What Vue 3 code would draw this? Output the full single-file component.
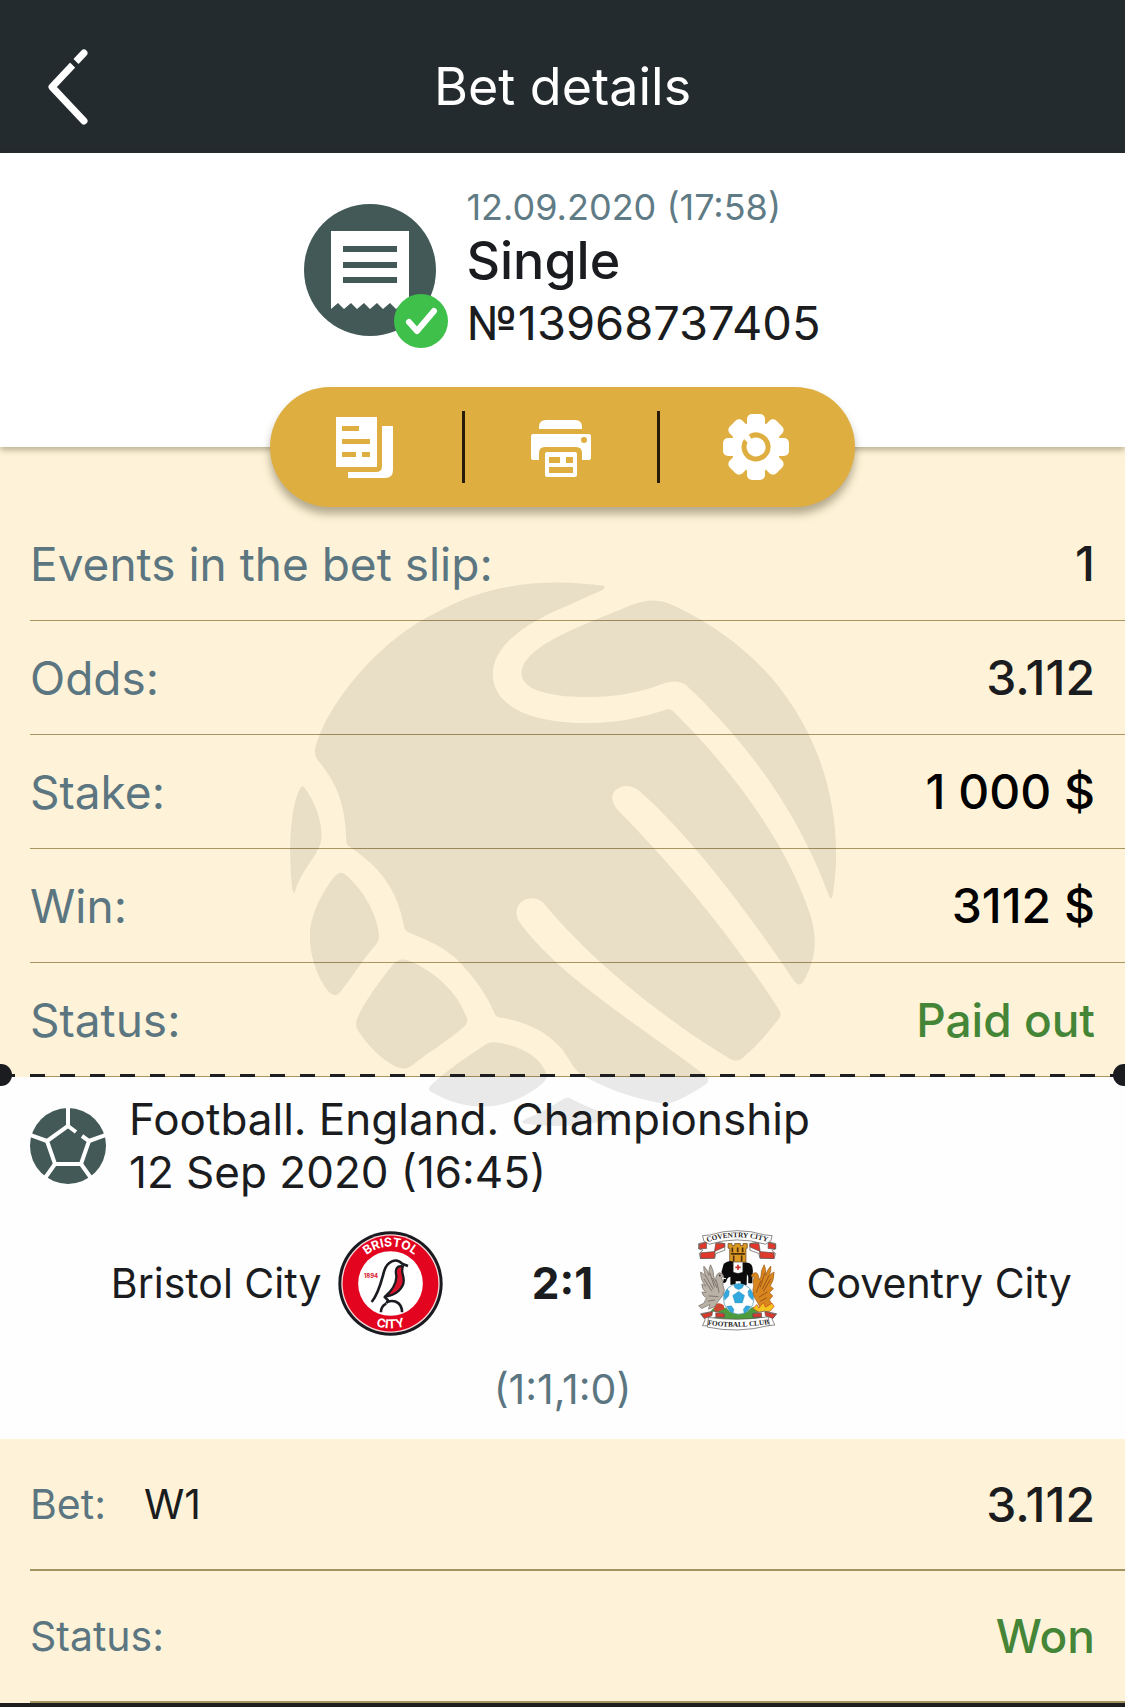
<template>
  <div class="page">
    <header class="topbar">
      <button class="back" type="button" aria-label="Back">
        <svg viewBox="0 0 44 80" width="44" height="80">
          <path d="M38 6L6 40L38 74" />
          <path class="cut" d="M23 11L34 22" />
        </svg>
      </button>
      <h1>Bet details</h1>
    </header>

    <section class="ticket">
      <svg class="ticket-icon" viewBox="0 0 144 144" width="144" height="144" aria-hidden="true">
        <circle cx="66" cy="66" r="66" fill="#425957" />
        <path d="M27 27H105V104L99 99L92 105L86 99L79 105L73 99L66 105L60 99L53 105L47 99L40 105L34 99L27 105Z" fill="#fff" />
        <path d="M39 45H93M39 61H93M39 76H93" stroke="#425957" stroke-width="6" />
        <circle cx="117" cy="117" r="27" fill="#3fc04b" />
        <path d="M105 118 L113 127 L130 107" fill="none" stroke="#fff" stroke-width="6" stroke-linecap="round" stroke-linejoin="round" />
      </svg>
      <div class="ticket-text">
        <time class="date">12.09.2020 (17:58)</time>
        <h2>Single</h2>
        <div class="number">№13968737405</div>
      </div>
    </section>

    <main class="slip">
      <section class="summary">
        <nav class="actions">
          <button type="button" aria-label="Copy bet slip">
            <svg viewBox="0 0 68 68" width="68" height="68">
              <path fill-rule="evenodd" d="M4 4H45V54H4ZM10 13V18H27V13ZM10 26V31H38V26ZM10 39V44H24V39ZM30 39V44H38V39Z" />
              <path d="M50 13H61V57Q61 65 53 65H16V59H44Q50 59 50 53Z" />
            </svg>
          </button>
          <button type="button" aria-label="Print">
            <svg viewBox="0 0 68 68" width="68" height="68">
              <path d="M12 16V14Q12 7 19 7H48Q55 7 55 14V16Z" />
              <path fill-rule="evenodd" d="M6 21H62Q64 21 64 23V45Q64 47 62 47H55V40Q55 34 49 34H18Q12 34 12 40V47H6Q4 47 4 45V23Q4 21 6 21ZM57 24A3 3 0 1 0 57 30A3 3 0 1 0 57 24Z" />
              <path fill-rule="evenodd" d="M20 39H48Q50 39 50 41V62Q50 64 48 64H20Q18 64 18 62V41Q18 39 20 39ZM22 44V50H33V44ZM39 44V50H46V44ZM22 54V60H46V54Z" />
            </svg>
          </button>
          <button type="button" aria-label="Settings">
            <svg viewBox="0 0 68 68" width="68" height="68">
              <circle cx="34" cy="34" r="25" />
              <rect
                v-for="angle in gearTeeth"
                :key="angle"
                x="25" y="1" width="18" height="18" rx="5"
                :transform="`rotate(${angle} 34 34)`"
              />
              <path class="gear-ring" d="M28 23.6A12 12 0 1 1 24.5 26.7" />
              <path d="M25 22L33 30L30 34L22 26Z" />
            </svg>
          </button>
        </nav>

        <dl class="rows">
          <div v-for="row in summary" :key="row.label" class="row">
            <dt>{{ row.label }}</dt>
            <dd :class="row.tone">{{ row.value }}</dd>
          </div>
        </dl>
        <div class="tear"></div>
      </section>

      <section class="event">
        <div class="event-head">
          <svg viewBox="0 0 76 76" width="76" height="76" aria-hidden="true">
            <circle cx="38" cy="38" r="38" fill="#425957" />
            <g fill="none" stroke="#fff" stroke-width="4">
              <path d="M38 0V18L17 33L25 56H51L59 33L52 28M38 18L46 24" />
              <path d="M17 33L0 27M59 33L76 27M25 56L15 70M51 56L61 70" />
            </g>
          </svg>
          <div class="event-title">
            <div>Football. England. Championship</div>
            <div>12 Sep 2020 (16:45)</div>
          </div>
        </div>

        <div class="match">
          <div class="team home">
            <span>Bristol City</span>
            <svg viewBox="46 43 318 318" width="105" height="105" role="img" aria-label="Bristol City crest">
              <defs>
                <path id="arcTop" d="M93 202A112 112 0 0 1 317 202" />
                <path id="arcBottom" d="M69 202A136 136 0 0 0 341 202" />
              </defs>
              <circle cx="205" cy="202" r="158" fill="#191b20" />
              <circle cx="205" cy="202" r="149" fill="#f6d9dc" />
              <circle cx="205" cy="202" r="145" fill="#e3041f" />
              <circle cx="205" cy="202" r="98" fill="#fff" />
              <text class="crest-ring"><textPath href="#arcTop" startOffset="50%" text-anchor="middle">BRISTOL</textPath></text>
              <text class="crest-ring"><textPath href="#arcBottom" startOffset="50%" text-anchor="middle">CITY</textPath></text>
              <text class="crest-year" x="124" y="186">1894</text>
              <path d="M243 150C220 146 219 164 223 181C222 203 212 222 188 242C221 238 247 216 245 190C243 170 236 165 243 150Z" fill="#d8122a" stroke="#191b20" stroke-width="7" stroke-linejoin="round" />
              <g fill="none" stroke="#191b20" stroke-width="8">
                <path d="M148 258C170 232 178 192 186 164C194 136 222 122 240 142L258 149" />
                <path d="M186 241L198 254L192 262" />
                <path d="M176 289C176 276 182 268 192 263M196 257C224 249 240 266 240 289" />
              </g>
            </svg>
          </div>
          <strong class="score">2:1</strong>
          <div class="team">
            <svg viewBox="35 48 326 326" width="108" height="108" role="img" aria-label="Coventry City crest">
              <defs>
                <path id="ribbonTop" d="M112 86Q198 60 286 86" />
                <path id="ribbonBottom" d="M112 338Q198 350 292 335" />
              </defs>
              <!-- upper ribbon -->
              <g stroke="#55504e" stroke-width="2">
                <path d="M82 92L120 84L161 92V112L134 122L131 136L88 137L84 122L95 112L82 108Z" fill="#fff" />
                <path d="M315 92L278 84L237 92V112L264 122L267 136L310 137L314 122L303 112L315 108Z" fill="#fff" />
                <path d="M84 94L106 88V107L84 108ZM134 91L161 92V102L130 116ZM88 120L132 116L130 136L88 137Z" fill="#e0392c" />
                <path d="M314 94L292 88V107L314 108ZM264 91L237 92V102L268 116ZM310 120L266 116L268 136L310 137Z" fill="#e0392c" />
                <path d="M94 68L116 66Q198 40 282 66L304 68L300 84L284 94Q198 68 114 94L98 84Z" fill="#fff" />
              </g>
              <text class="crest-ribbon"><textPath href="#ribbonTop" startOffset="50%" text-anchor="middle">COVENTRY CITY</textPath></text>
              <!-- castle and elephant -->
              <path d="M171 92H183V98H191V92H208V98H216V92H229V106H225V148H176V106H171Z" fill="#dc9a25" stroke="#5b3a10" stroke-width="2" />
              <path d="M184 104V118M200 104V118M215 104V118M180 123H222M188 128V146M212 128V146" stroke="#4c300c" stroke-width="5" />
              <path d="M158 153Q176 139 190 149H228Q246 150 246 174L244 212H232V192L228 184L227 217H209V206H194V216H178V192Q168 194 166 206Q162 214 153 209Q160 204 157 192L151 178Z" fill="#0c0b0c" />
              <path d="M154 184Q150 198 165 198" fill="none" stroke="#faf5e9" stroke-width="3" />
              <path d="M187 148H215V178Q201 185 187 178Z" fill="#fff" stroke="#777" stroke-width="1" />
              <path d="M201 156V172M193 164H209" stroke="#c6342b" stroke-width="5" />
              <!-- ground -->
              <path d="M116 300Q132 274 160 286H240Q266 276 294 300L284 317Q198 328 126 318Z" fill="#4c9b3c" />
              <path d="M128 288Q136 262 158 278L160 290L132 300Z" fill="#cf4630" />
              <!-- ball -->
              <circle cx="203" cy="259" r="46" fill="#fff" stroke="#3f8fb4" stroke-width="2" />
              <g fill="#32a9de" stroke="#2c81aa" stroke-width="1">
                <path d="M203 236L221 249L214 271H192L185 249Z" />
                <path d="M188 217L203 213L219 217L214 226L203 231L192 226Z" />
                <path d="M158 248L168 229L175 236L173 250L161 263Z" />
                <path d="M248 248L238 229L231 236L233 250L245 263Z" />
                <path d="M167 281L181 280L189 291L186 302Q174 296 167 281Z" />
                <path d="M239 281L225 280L217 291L220 302Q232 296 239 281Z" />
              </g>
              <!-- griffin -->
              <path d="M88 178Q98 182 103 190Q96 172 98 160Q110 172 113 188Q112 168 118 156Q128 172 128 192L134 206Q132 186 144 180Q156 180 158 192L150 194L156 206Q154 220 160 232Q158 250 146 260Q136 272 132 282L112 290L116 276L92 288L82 280L98 272L106 256Q94 250 92 238L104 240Q90 226 92 214L104 220Q88 204 88 178Z" fill="#b9b0a6" stroke="#6f6761" stroke-width="2" />
              <path d="M98 198L122 236M104 190L126 230M116 180L130 224M124 196L138 226M136 204L144 240M112 250L142 252M110 266L132 262" fill="none" stroke="#7d746d" stroke-width="3" />
              <circle cx="146" cy="188" r="3" fill="#3b3532" />
              <!-- phoenix -->
              <path d="M310 178Q300 182 295 190Q302 172 300 160Q288 172 285 188Q286 168 280 156Q270 172 270 192L264 202Q264 184 256 180Q246 178 240 190L250 194L246 206Q250 220 246 232Q246 250 254 260Q262 272 266 282L286 290L304 276L296 262L306 250L296 240L308 228L298 220Q310 204 310 178Z" fill="#d9861f" stroke="#9b5c1c" stroke-width="2" />
              <path d="M300 198L278 236M294 190L274 230M282 180L268 224M270 204L256 240M290 238L264 254M288 256L268 266" fill="none" stroke="#9a551a" stroke-width="3" />
              <path d="M246 288L258 276L264 286L278 270L284 284L304 272L310 282L298 296L266 300Z" fill="#f3c51f" stroke="#cf3f24" stroke-width="2" />
              <!-- lower ribbon -->
              <g stroke="#55504e" stroke-width="2">
                <path d="M88 304L126 296L160 303V314L128 316L116 340L94 340L102 322Z" fill="#fff" />
                <path d="M318 304L280 296L246 303V314L278 316L290 340L312 338L304 320Z" fill="#fff" />
                <path d="M90 305L124 298L122 310L100 318ZM134 301L160 304V314L134 314Z" fill="#d8392d" />
                <path d="M316 305L282 298L284 310L306 318ZM272 301L246 304V314L272 314Z" fill="#d8392d" />
                <path d="M112 315Q200 327 292 313L296 339Q200 364 108 344Z" fill="#fff" />
              </g>
              <text class="crest-ribbon"><textPath href="#ribbonBottom" startOffset="50%" text-anchor="middle">FOOTBALL CLUB</textPath></text>
            </svg>
            <span>Coventry City</span>
          </div>
        </div>
        <div class="halves">(1:1,1:0)</div>
      </section>

      <!-- ball watermark, runs across both sections -->
      <svg class="watermark" viewBox="54 58 1424 1424" aria-hidden="true">
        <path d="M872 68C882 74 862 82 835 94L740 136C650 178 583 232 583 298C583 386 690 426 830 426C910 426 970 412 1038 390Q1046 388 1054 396C1180 520 1345 720 1412 930C1430 990 1426 1040 1394 1098Q1384 1116 1370 1100C1290 980 1120 740 966 604C944 584 916 588 902 602C888 618 894 638 912 656C1060 806 1210 990 1330 1174Q1338 1186 1328 1198C1300 1236 1270 1268 1236 1298Q1222 1312 1202 1302C1050 1210 850 1060 716 896C700 878 670 880 656 894C640 910 642 932 656 950C760 1090 960 1210 1138 1346Q1152 1358 1138 1368C1110 1388 1090 1398 1064 1410Q1040 1422 1006 1414C930 1400 870 1374 822 1348C790 1330 782 1296 758 1270C720 1228 660 1202 602 1194Q590 1192 586 1180C566 1130 520 1070 482 1036C440 1000 400 988 364 972Q354 968 352 958C342 910 332 876 302 834C276 796 240 770 206 746Q200 742 201 732C198 660 190 600 128 524Q116 510 120 492C150 370 300 200 432 140C580 54 740 50 872 68Z" />
        <path d="M940 120C990 100 1020 102 1060 122C1190 184 1300 276 1370 390C1460 530 1496 710 1470 870Q1466 896 1458 872C1380 660 1250 480 1086 326C1066 312 1040 318 1024 324C970 346 900 358 830 358C720 358 660 336 658 298C658 226 810 174 940 120Z" />
        <path d="M80 598Q86 584 94 598C118 630 138 680 136 724C134 768 88 800 68 862Q64 878 60 858C50 780 52 650 80 598Z" />
        <path d="M172 824Q186 808 202 824C246 862 282 926 286 980Q286 994 278 1004C246 1040 218 1086 186 1126Q172 1144 156 1128C124 1090 104 1030 106 974C108 920 144 858 172 824Z" />
        <path d="M322 1056Q340 1036 364 1046C430 1072 494 1130 516 1198Q518 1210 508 1218C464 1256 414 1286 370 1320Q352 1332 330 1322C292 1304 254 1264 230 1226Q224 1216 228 1200C244 1156 288 1100 322 1056Z" />
        <path d="M564 1264Q578 1256 592 1259C648 1266 704 1292 722 1338Q726 1356 710 1368C670 1402 610 1428 550 1426C496 1424 456 1408 420 1386Q412 1380 422 1370C464 1330 514 1298 564 1264Z" />
        <path d="M768 1406Q778 1400 790 1407C830 1428 866 1442 910 1454C840 1478 740 1482 664 1470Q652 1466 670 1458C706 1444 740 1424 768 1406Z" />
      </svg>
    </main>

    <dl class="bet-rows">
      <div class="bet-row">
        <dt>Bet:</dt>
        <dd class="pick">W1</dd>
        <dd class="value">3.112</dd>
      </div>
      <div class="bet-row">
        <dt>Status:</dt>
        <dd class="value green">Won</dd>
      </div>
    </dl>
  </div>
</template>

<script setup>
const summary = [
  { label: 'Events in the bet slip:', value: '1' },
  { label: 'Odds:', value: '3.112' },
  { label: 'Stake:', value: '1 000 $', tone: 'black' },
  { label: 'Win:', value: '3112 $', tone: 'black' },
  { label: 'Status:', value: 'Paid out', tone: 'green' },
];

const gearTeeth = [0, 45, 90, 135, 180, 225, 270, 315];
</script>

<style>
body {
  margin: 0;
  background: #1e1e1e;
}
</style>

<style scoped>
.page {
  font-family: Inter, "Liberation Sans", sans-serif;
  color: #1a1c20;
  background: #fff;
}

h1,
h2,
dl,
dd {
  margin: 0;
}

button {
  padding: 0;
  border: 0;
  background: none;
  cursor: pointer;
}

svg {
  display: block;
  flex: none;
}

/* header */
.topbar {
  display: grid;
  grid-template-columns: 96px 1fr 96px;
  align-items: center;
  height: 133px;
  padding-top: 20px;
  background: #242b2e;
}

.back {
  justify-self: start;
  margin-left: 46px;
}

.back svg {
  fill: none;
  stroke: #fff;
  stroke-width: 7;
  stroke-linecap: round;
  stroke-linejoin: round;
}

.back .cut {
  stroke: #242b2e;
  stroke-width: 5;
}

.topbar h1 {
  font-size: 52px;
  font-weight: 400;
  text-align: center;
  color: #fff;
}

/* ticket */
.ticket {
  position: relative;
  z-index: 1;
  display: flex;
  justify-content: center;
  gap: 18px;
  padding: 32px 0 94px;
  background: #fff;
  box-shadow: 0 3px 6px rgba(60, 50, 20, 0.35);
}

.ticket-icon {
  margin-top: 19px;
}

.date {
  display: block;
  font-size: 36px;
  line-height: 44px;
  color: #5f7b85;
}

.ticket h2 {
  font-size: 52px;
  font-weight: 500;
  line-height: 64px;
}

.number {
  font-size: 47px;
  line-height: 60px;
}

/* action pill */
.slip {
  position: relative;
}

.summary {
  position: relative;
  display: flex;
  flex-direction: column;
  background: #fef3d8;
}

.actions {
  position: relative;
  z-index: 2;
  display: flex;
  align-self: center;
  align-items: center;
  width: 52%;
  height: 120px;
  margin-top: -60px;
  border-radius: 60px;
  background: #deae40;
  box-shadow: 0 7px 9px rgba(60, 50, 20, 0.38);
}

.actions button {
  flex: 1;
  display: flex;
  align-items: center;
  justify-content: center;
  height: 72px;
  border-right: 3px solid #281c08;
}

.actions button:last-child {
  border-right-color: transparent;
}

.actions svg {
  fill: #fff;
}

.actions .gear-ring {
  fill: none;
  stroke: #deae40;
  stroke-width: 5;
}

/* summary rows */
.row {
  display: flex;
  align-items: center;
  justify-content: space-between;
  height: 113px;
  margin-left: 30px;
  padding-right: 30px;
  border-bottom: 1px solid #a99560;
  font-size: 46px;
}

dt {
  color: #5b7681;
}

.row dd,
.value {
  font-size: 48px;
  font-weight: 500;
}

.row .black {
  color: #000;
}

.row .green,
.value.green {
  font-size: 46px;
  color: #458537;
}

.tear {
  height: 3px;
  margin-top: -3px;
  background: repeating-linear-gradient(90deg, #1e1f20 0 15px, transparent 15px 30px);
}

/* punched holes at both ends of the tear line */
.tear::before,
.tear::after {
  content: "";
  position: absolute;
  z-index: 1;
  bottom: -9px;
  width: 12px;
  height: 22px;
  background: #1a1c20;
}

.tear::before {
  left: 0;
  border-radius: 0 11px 11px 0;
}

.tear::after {
  right: 0;
  border-radius: 11px 0 0 11px;
}

/* event */
.event {
  padding: 16px 0 26px;
  background: #fefefe;
}

.event-head {
  display: flex;
  align-items: center;
  gap: 23px;
  padding: 0 30px;
}

.event-title {
  font-size: 44px;
  line-height: 53px;
}

.match {
  display: grid;
  grid-template-columns: 1fr 240px 1fr;
  align-items: center;
  margin-top: 30px;
  font-size: 41px;
}

.team {
  display: flex;
  align-items: center;
  gap: 16px;
  white-space: nowrap;
}

.home {
  justify-content: flex-end;
}

.score {
  font-size: 44px;
  font-weight: 700;
  text-align: center;
}

.halves {
  margin-top: 28px;
  font-size: 41px;
  line-height: 48px;
  text-align: center;
  color: #5b7681;
}

.crest-ring {
  font-size: 37px;
  font-weight: 700;
  fill: #fff;
}

.crest-year {
  font-size: 18px;
  font-weight: 700;
  fill: #d8122a;
}

.crest-ribbon {
  font-family: "Liberation Serif", serif;
  font-size: 22px;
  font-weight: 700;
  fill: #222;
}

.watermark {
  position: absolute;
  top: 135px;
  left: 50%;
  width: 546px;
  height: 546px;
  margin-left: -273px;
  fill: rgba(20, 20, 20, 0.09);
  pointer-events: none;
}

/* bet */
.bet-rows {
  background: #fef3d8;
}

.bet-row {
  display: flex;
  align-items: center;
  gap: 38px;
  height: 130px;
  margin-left: 30px;
  padding-right: 30px;
  border-bottom: 2px solid #a39361;
  font-size: 41px;
}

.value {
  margin-left: auto;
}
</style>
